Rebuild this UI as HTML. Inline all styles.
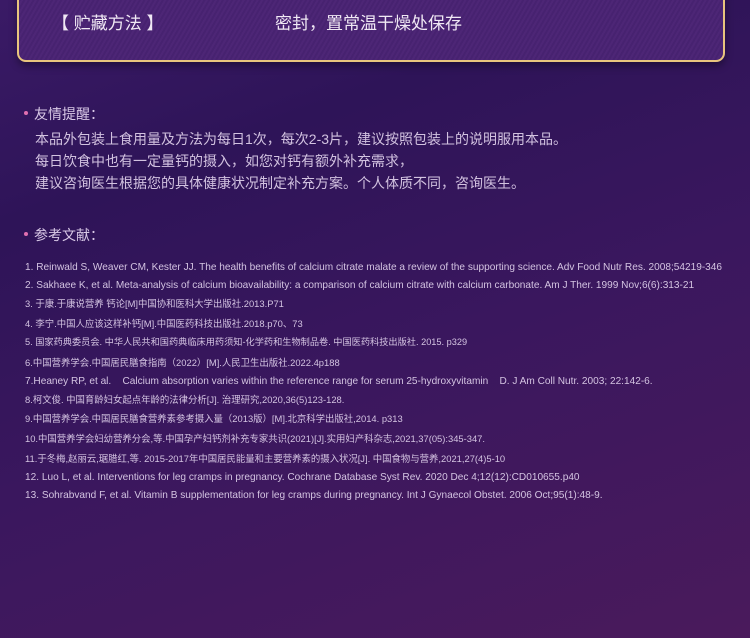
<!DOCTYPE html>
<html><head><meta charset="utf-8"><style>
*{margin:0;padding:0;box-sizing:border-box}
body{width:750px;height:638px;overflow:hidden;position:relative;font-family:"Liberation Sans","Noto Sans CJK SC",sans-serif;
background:linear-gradient(160deg,#3a1a66 0%,#2e1458 25%,#3a175e 55%,#4a1a5c 100%);}
.box{position:absolute;left:17px;top:-20px;width:708px;height:82px;border:2px solid #e9c57e;border-radius:9px;
background:repeating-linear-gradient(-60deg,#4d2676 0 2px,#472270 2px 4px);box-shadow:0 4px 8px rgba(0,0,0,.35)}
.t{position:absolute;color:#f0e8f4;font-size:17px;top:9px}
.h{position:absolute;left:24px;font-size:14px;color:#d8c8e6}
.h:before{content:"";position:absolute;left:0;top:7px;width:4px;height:4px;border-radius:50%;background:#e070b0}
.h span{margin-left:10px}
.p{position:absolute;left:35px;top:128px;font-size:14px;line-height:22px;color:#d2c2e0}
.r{position:absolute;left:25px;font-size:9.4px;line-height:12px;color:#d4c4e2;white-space:nowrap}
.l{font-size:10.1px}
</style></head><body>
<div class="box"></div>
<div class="t" style="left:52px">【 贮藏方法 】</div>
<div class="t" style="left:275px">密封，置常温干燥处保存</div>
<div class="h" style="top:104px"><span>友情提醒：</span></div>
<div class="p">本品外包装上食用量及方法为每日1次，每次2-3片，建议按照包装上的说明服用本品。<br>每日饮食中也有一定量钙的摄入，如您对钙有额外补充需求，<br>建议咨询医生根据您的具体健康状况制定补充方案。个人体质不同，咨询医生。</div>
<div class="h" style="top:225px"><span>参考文献：</span></div>
<div class="r l" style="top:262px">1. Reinwald S, Weaver CM, Kester JJ. The health benefits of calcium citrate malate a review of the supporting science. Adv Food Nutr Res. 2008;54219-346</div>
<div class="r l" style="top:280px">2. Sakhaee K, et al. Meta-analysis of calcium bioavailability: a comparison of calcium citrate with calcium carbonate. Am J Ther. 1999 Nov;6(6):313-21</div>
<div class="r" style="top:298px">3. 于康.于康说营养 钙论[M]中国协和医科大学出版社.2013.P71</div>
<div class="r" style="top:318px">4. 李宁.中国人应该这样补钙[M].中国医药科技出版社.2018.p70、73</div>
<div class="r" style="top:336px;font-size:9.2px">5. 国家药典委员会. 中华人民共和国药典临床用药须知-化学药和生物制品卷. 中国医药科技出版社. 2015. p329</div>
<div class="r" style="top:357px">6.中国营养学会.中国居民膳食指南（2022）[M].人民卫生出版社.2022.4p188</div>
<div class="r l" style="top:376px">7.Heaney RP, et al.&nbsp;&nbsp;&nbsp; Calcium absorption varies within the reference range for serum 25-hydroxyvitamin&nbsp;&nbsp;&nbsp; D. J Am Coll Nutr. 2003; 22:142-6.</div>
<div class="r" style="top:394px">8.柯文俊. 中国育龄妇女起点年龄的法律分析[J]. 治理研究,2020,36(5)123-128.</div>
<div class="r" style="top:413px">9.中国营养学会.中国居民膳食营养素参考摄入量（2013版）[M].北京科学出版社,2014. p313</div>
<div class="r" style="top:433px">10.中国营养学会妇幼营养分会,等.中国孕产妇钙剂补充专家共识(2021)[J].实用妇产科杂志,2021,37(05):345-347.</div>
<div class="r" style="top:453px">11.于冬梅,赵丽云,琚腊红,等. 2015-2017年中国居民能量和主要营养素的摄入状况[J]. 中国食物与营养,2021,27(4)5-10</div>
<div class="r l" style="top:472px">12. Luo L, et al. Interventions for leg cramps in pregnancy. Cochrane Database Syst Rev. 2020 Dec 4;12(12):CD010655.p40</div>
<div class="r l" style="top:490px">13. Sohrabvand F, et al. Vitamin B supplementation for leg cramps during pregnancy. Int J Gynaecol Obstet. 2006 Oct;95(1):48-9.</div>
</body></html>
